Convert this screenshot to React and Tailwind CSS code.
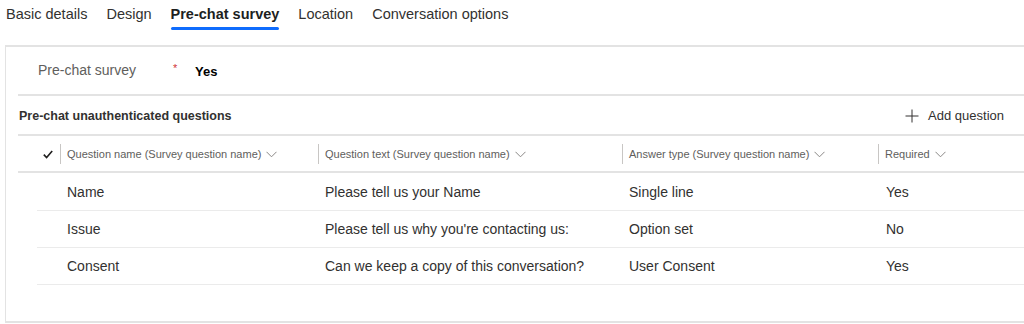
import React from "react";

const tabs = ["Basic details", "Design", "Pre-chat survey", "Location", "Conversation options"];

const columns = [
  { label: "Question name (Survey question name)", w: "w-[258px]" },
  { label: "Question text (Survey question name)", w: "w-[304px]" },
  { label: "Answer type (Survey question name)", w: "w-[256px]" },
  { label: "Required", w: "flex-1" },
];

const rows = [
  ["Name", "Please tell us your Name", "Single line", "Yes"],
  ["Issue", "Please tell us why you're contacting us:", "Option set", "No"],
  ["Consent", "Can we keep a copy of this conversation?", "User Consent", "Yes"],
];

function Chevron() {
  return (
    <svg width="11" height="7" viewBox="0 0 11 7" className="ml-[5px] inline-block" fill="none">
      <path d="M0.5 0.8 L5.5 5.8 L10.5 0.8" stroke="#8a8886" strokeWidth="1" />
    </svg>
  );
}

export default function App() {
  return (
    <div
      className="w-[1024px] h-[324px] overflow-hidden bg-white text-[#323130]"
      style={{ fontFamily: '"Segoe UI", "Liberation Sans", Arial, sans-serif' }}
    >
      {/* tabs */}
      <div className="flex h-[45px] pl-[6px] gap-[19px]">
        {tabs.map((t) => {
          const active = t === "Pre-chat survey";
          return (
            <div key={t} className="flex flex-col">
              <div
                className={
                  "h-[27px] flex items-center text-[14.5px] leading-none pt-[2px] " +
                  (active ? "font-semibold text-[#201f1e]" : "text-[#323130]")
                }
              >
                {t}
              </div>
              <div className={"h-[3px] rounded-full " + (active ? "bg-[#0f6cfd]" : "bg-transparent")} />
            </div>
          );
        })}
      </div>

      {/* panel */}
      <div className="ml-[5px] w-[1030px] h-[278px] border-l border-t-2 border-b-2 border-[#e3e3e3] flex flex-col">
        <div className="ml-[12px] flex flex-col">
          {/* field */}
          <div className="h-[49px] flex items-center border-b-2 border-[#e3e3e3]">
            <div className="w-[156px] pl-[20px] text-[14px] text-[#605e5c] -mt-[1px]">Pre-chat survey</div>
            <div className="w-[21px] text-[#d13438] text-[11px] -mt-[5px] -ml-[1px]">*</div>
            <div className="text-[13px] font-semibold text-black mt-[2px] ml-[1px]">Yes</div>
          </div>

          {/* section header */}
          <div className="h-[40px] flex items-center border-b-2 border-[#e3e3e3] pr-[31px] pt-[2px]">
            <div className="text-[12.5px] font-semibold text-[#323130] pl-[1px]">Pre-chat unauthenticated questions</div>
            <div className="ml-auto flex items-center text-[13px] text-[#323130]">
              <svg width="14" height="14" viewBox="0 0 14 14" className="mr-[9px]">
                <path d="M7 0.5 V13.5 M0.5 7 H13.5" stroke="#323130" strokeWidth="1" />
              </svg>
              Add question
            </div>
          </div>

          {/* column headers */}
          <div className="h-[37px] flex items-center border-b-2 border-[#e3e3e3] text-[11px] text-[#605e5c] pt-[1px]">
            <div className="w-[42px] flex justify-end pr-[7px]">
              <svg width="10" height="9" viewBox="0 0 10 9" fill="none">
                <path d="M0.8 4.6 L3.6 7.6 L9.2 1" stroke="#201f1e" strokeWidth="1.6" />
              </svg>
            </div>
            {columns.map((c) => (
              <div key={c.label} className={c.w + " flex items-center"}>
                <div className="w-px h-[20px] bg-[#c8c6c4] mr-[6px]" />
                <span>{c.label}</span>
                <Chevron />
              </div>
            ))}
          </div>

          {/* rows */}
          {rows.map((r, i) => (
            <div
              key={r[0]}
              className={
                "ml-[19px] flex items-center border-b border-[#ebebeb] text-[14px] text-[#323130] pt-[1px] " +
                (i === 0 ? "h-[38px]" : "h-[37px]")
              }
            >
              <div className="w-[30px]" />
              <div className="w-[258px]">{r[0]}</div>
              <div className="w-[304px]">{r[1]}</div>
              <div className="w-[257px]">{r[2]}</div>
              <div className="flex-1">{r[3]}</div>
            </div>
          ))}
        </div>
      </div>
    </div>
  );
}
